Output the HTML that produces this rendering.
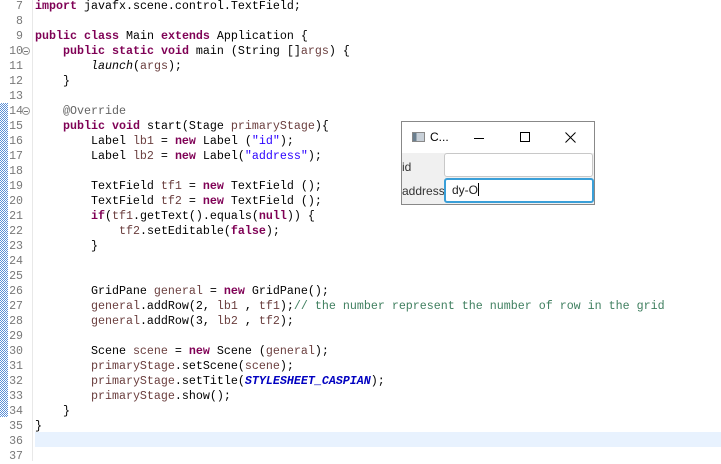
<!DOCTYPE html>
<html><head><meta charset="utf-8"><style>
body{margin:0;width:721px;height:461px;background:#fff;overflow:hidden;position:relative;font-family:"Liberation Mono",monospace;}
.g{position:absolute;left:0;top:0;width:32px;height:461px;background:#fff;}
.gl{position:absolute;left:32px;top:0;width:1px;height:461px;background:#e8e8e8;}
.dots{position:absolute;left:0;top:103px;width:8px;height:314px;background-image:repeating-conic-gradient(#5b8fd6 0 25%,#fff 0 50%);background-size:2px 2px;}
.cur{position:absolute;left:35px;top:432px;width:686px;height:15px;background:#e8f2fe;}
.ln{position:absolute;left:0;width:23px;text-align:right;font-size:11.6px;color:#787878;line-height:15px;}
.c{position:absolute;left:35px;font-size:11.67px;line-height:15px;white-space:pre;color:#000;}
.k{color:#7f0055;font-weight:bold}.s{color:#2a00ff}.v{color:#6a3e3e}.cm{color:#3f7f5f}.a{color:#646464}.f{color:#0000c0;font-style:italic;font-weight:bold}.i{font-style:italic}
.fold{position:absolute;left:22px;width:8px;height:8px;border:1px solid #999;border-radius:50%;box-sizing:border-box;}
.fold:after{content:"";position:absolute;left:1px;top:3px;width:4px;height:1px;background:#777;}
.win{position:absolute;left:401px;top:121px;width:194px;height:84px;border:1px solid #888;box-sizing:border-box;background:#f0f0f0;font-family:"Liberation Sans",sans-serif;}
.tb{position:absolute;left:0;top:0;width:192px;height:31px;background:#fff;}
.wrap{position:absolute;left:0;top:2px;width:721px;height:461px;}
</style></head><body>
<div class="g"></div><div class="gl"></div><div class="dots"></div><div class="cur"></div>
<div class="wrap">
<div class="ln" style="top:-3px">7</div>
<div class="ln" style="top:12px">8</div>
<div class="ln" style="top:27px">9</div>
<div class="ln" style="top:42px">10</div>
<div class="ln" style="top:57px">11</div>
<div class="ln" style="top:72px">12</div>
<div class="ln" style="top:87px">13</div>
<div class="ln" style="top:102px">14</div>
<div class="ln" style="top:117px">15</div>
<div class="ln" style="top:132px">16</div>
<div class="ln" style="top:147px">17</div>
<div class="ln" style="top:162px">18</div>
<div class="ln" style="top:177px">19</div>
<div class="ln" style="top:192px">20</div>
<div class="ln" style="top:207px">21</div>
<div class="ln" style="top:222px">22</div>
<div class="ln" style="top:237px">23</div>
<div class="ln" style="top:252px">24</div>
<div class="ln" style="top:267px">25</div>
<div class="ln" style="top:282px">26</div>
<div class="ln" style="top:297px">27</div>
<div class="ln" style="top:312px">28</div>
<div class="ln" style="top:327px">29</div>
<div class="ln" style="top:342px">30</div>
<div class="ln" style="top:357px">31</div>
<div class="ln" style="top:372px">32</div>
<div class="ln" style="top:387px">33</div>
<div class="ln" style="top:402px">34</div>
<div class="ln" style="top:417px">35</div>
<div class="ln" style="top:432px">36</div>
<div class="ln" style="top:447px">37</div>
<div class="fold" style="top:45px"></div>
<div class="fold" style="top:105px"></div>
<div class="c" style="top:-3px"><span class="k">import</span> javafx.scene.control.TextField;</div>
<div class="c" style="top:27px"><span class="k">public</span> <span class="k">class</span> Main <span class="k">extends</span> Application {</div>
<div class="c" style="top:42px">    <span class="k">public</span> <span class="k">static</span> <span class="k">void</span> main (String []<span class="v">args</span>) {</div>
<div class="c" style="top:57px">        <span class="i">launch</span>(<span class="v">args</span>);</div>
<div class="c" style="top:72px">    }</div>
<div class="c" style="top:102px">    <span class="a">@Override</span></div>
<div class="c" style="top:117px">    <span class="k">public</span> <span class="k">void</span> start(Stage <span class="v">primaryStage</span>){</div>
<div class="c" style="top:132px">        Label <span class="v">lb1</span> = <span class="k">new</span> Label (<span class="s">"id"</span>);</div>
<div class="c" style="top:147px">        Label <span class="v">lb2</span> = <span class="k">new</span> Label(<span class="s">"address"</span>);</div>
<div class="c" style="top:177px">        TextField <span class="v">tf1</span> = <span class="k">new</span> TextField ();</div>
<div class="c" style="top:192px">        TextField <span class="v">tf2</span> = <span class="k">new</span> TextField ();</div>
<div class="c" style="top:207px">        <span class="k">if</span>(<span class="v">tf1</span>.getText().equals(<span class="k">null</span>)) {</div>
<div class="c" style="top:222px">            <span class="v">tf2</span>.setEditable(<span class="k">false</span>);</div>
<div class="c" style="top:237px">        }</div>
<div class="c" style="top:282px">        GridPane <span class="v">general</span> = <span class="k">new</span> GridPane();</div>
<div class="c" style="top:297px">        <span class="v">general</span>.addRow(2, <span class="v">lb1</span> , <span class="v">tf1</span>);<span class="cm">// the number represent the number of row in the grid</span></div>
<div class="c" style="top:312px">        <span class="v">general</span>.addRow(3, <span class="v">lb2</span> , <span class="v">tf2</span>);</div>
<div class="c" style="top:342px">        Scene <span class="v">scene</span> = <span class="k">new</span> Scene (<span class="v">general</span>);</div>
<div class="c" style="top:357px">        <span class="v">primaryStage</span>.setScene(<span class="v">scene</span>);</div>
<div class="c" style="top:372px">        <span class="v">primaryStage</span>.setTitle(<span class="f">STYLESHEET_CASPIAN</span>);</div>
<div class="c" style="top:387px">        <span class="v">primaryStage</span>.show();</div>
<div class="c" style="top:402px">    }</div>
<div class="c" style="top:417px">}</div>
</div>

<div class="win">
 <div class="tb">
  <div style="position:absolute;left:10px;top:10px;width:13px;height:10px;background:linear-gradient(90deg,#6b7f8f 0 30%,#c8d0d8 30% 100%);border:1px solid #888;box-sizing:border-box"></div>
  <div style="position:absolute;left:28px;top:8px;font-size:12px;color:#000">C...</div>
  <div style="position:absolute;left:72px;top:16px;width:10px;height:1px;background:#000"></div>
  <div style="position:absolute;left:118px;top:10px;width:10px;height:10px;border:1px solid #000;box-sizing:border-box"></div>
  <svg style="position:absolute;left:163px;top:10px" width="11" height="11"><path d="M0.5 0.5L10.5 10.5M10.5 0.5L0.5 10.5" stroke="#000" stroke-width="1"/></svg>
 </div>
 <div style="position:absolute;left:0;top:38px;font-size:12px;color:#333">id</div>
 <div style="position:absolute;left:42px;top:31px;width:149px;height:24px;background:#fff;border:1px solid #c8c8c8;border-radius:3px;box-sizing:border-box"></div>
 <div style="position:absolute;left:0;top:62px;font-size:12px;color:#333">address</div>
 <div style="position:absolute;left:42px;top:56px;width:150px;height:25px;background:#fff;border:2px solid #3a9fd8;border-radius:3px;box-sizing:border-box;font-size:12px;padding:3px 0 0 6px;color:#222">dy-O<span style="display:inline-block;width:1px;height:13px;background:#000;vertical-align:-2px"></span></div>
</div>
</body></html>
